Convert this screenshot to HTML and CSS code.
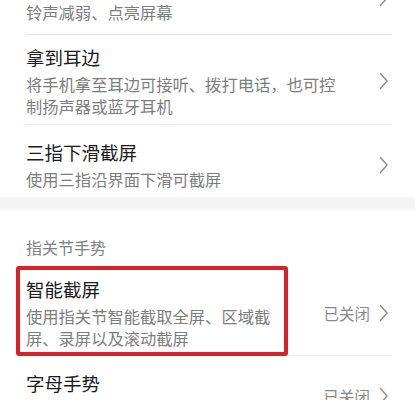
FILE: index.html
```html
<!DOCTYPE html>
<html lang="zh-CN">
<head>
<meta charset="utf-8">
<title>手势设置</title>
<link rel="stylesheet" href="styles.css">
</head>
<body>
<div class="page">
  <section class="group">
    <div class="row row-first">
      <div class="text">
        <div class="title">翻转手机</div>
        <div class="sub">铃声减弱、点亮屏幕</div>
      </div>
      <div class="side">
        <svg class="chev" width="10" height="18" viewBox="0 0 10 18"><path d="M1.5 1.5 L8 9 L1.5 16.5"/></svg>
      </div>
    </div>
    <div class="row">
      <div class="text">
        <div class="title">拿到耳边</div>
        <div class="sub">将手机拿至耳边可接听、拨打电话，也可控制扬声器或蓝牙耳机</div>
      </div>
      <div class="side">
        <svg class="chev" width="10" height="18" viewBox="0 0 10 18"><path d="M1.5 1.5 L8 9 L1.5 16.5"/></svg>
      </div>
    </div>
    <div class="row row-single row-last">
      <div class="text">
        <div class="title">三指下滑截屏</div>
        <div class="sub">使用三指沿界面下滑可截屏</div>
      </div>
      <div class="side">
        <svg class="chev" width="10" height="18" viewBox="0 0 10 18"><path d="M1.5 1.5 L8 9 L1.5 16.5"/></svg>
      </div>
    </div>
  </section>
  <div class="band"></div>
  <section class="group">
    <div class="header">指关节手势</div>
    <div class="row row-hl">
      <span class="highlight"></span>
      <div class="text">
        <div class="title">智能截屏</div>
        <div class="sub">使用指关节智能截取全屏、区域截屏、录屏以及滚动截屏</div>
      </div>
      <div class="side">
        <span class="value">已关闭</span>
        <svg class="chev" width="10" height="18" viewBox="0 0 10 18"><path d="M1.5 1.5 L8 9 L1.5 16.5"/></svg>
      </div>
    </div>
    <div class="row row-single">
      <div class="text">
        <div class="title">字母手势</div>
        <div class="sub">指关节画字母快速打开应用</div>
      </div>
      <div class="side">
        <span class="value">已关闭</span>
        <svg class="chev" width="10" height="18" viewBox="0 0 10 18"><path d="M1.5 1.5 L8 9 L1.5 16.5"/></svg>
      </div>
    </div>
  </section>
</div>
</body>
</html>
```
FILE: styles.css
```css
html, body {
  margin: 0;
  padding: 0;
  background: #ffffff;
}
body {
  font-family: "Noto Sans CJK SC", "Noto Sans", sans-serif;
  color: #1a1a1a;
  overflow: hidden;
}
.page {
  margin-top: -37px;
  width: 415px;
}
.row {
  position: relative;
  display: flex;
  align-items: center;
  margin: 0 23px 0 25px;
  padding: 9px 0 7px;
  border-bottom: 1px solid #e8e8e8;
}
.row-first {
  padding-bottom: 11px;
}
.row-single {
  padding-top: 14px;
}
.row-last {
  border-bottom: none;
}
.row-hl {
  padding: 11px 0 6px;
}
.text {
  flex: 1;
  min-width: 0;
  padding-left: 1px;
}
.title {
  font-size: 18.5px;
  line-height: 26px;
  color: #1a1a1a;
}
.sub {
  margin-top: 3px;
  font-size: 16.3px;
  line-height: 22px;
  color: #7d7d7d;
}
.side {
  display: flex;
  align-items: center;
  margin-left: 40px;
  padding-right: 3px;
}
.value {
  font-size: 15.5px;
  line-height: 22px;
  color: #888888;
  margin-right: 9px;
}
.chev {
  display: block;
}
.chev path {
  fill: none;
  stroke: #8c8c8c;
  stroke-width: 1.4;
  stroke-linecap: round;
  stroke-linejoin: round;
}
.band {
  height: 13px;
  background: #f4f4f4;
}
.header {
  padding: 26px 0 7px 26px;
  font-size: 16px;
  line-height: 22px;
  color: #808080;
}
.highlight {
  position: absolute;
  left: -9px;
  top: 1px;
  width: 272px;
  height: 90px;
  box-sizing: border-box;
  border: 4px solid #d8212b;
  border-radius: 3px;
  pointer-events: none;
}
```
